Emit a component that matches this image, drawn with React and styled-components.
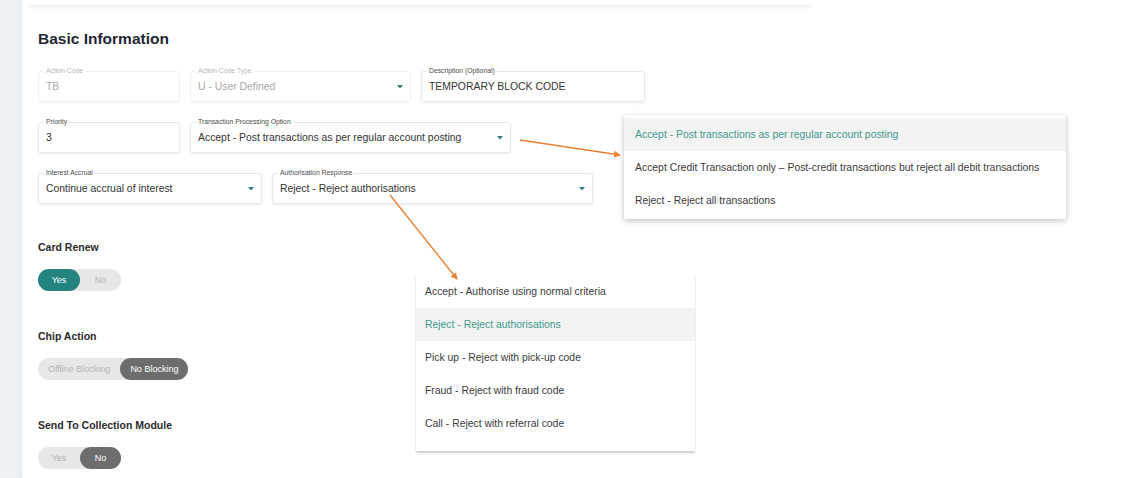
import React from "react";
import styled, { createGlobalStyle } from "styled-components";

const GlobalStyle = createGlobalStyle`
  html, body {
    margin: 0;
    padding: 0;
    background: #ffffff;
    font-family: "Liberation Sans", Arial, sans-serif;
  }
`;

const Shell = styled.div`
  position: relative;
  display: flex;
  width: 1131px;
  height: 478px;
  overflow: hidden;
  background: #ffffff;
`;

const Sidebar = styled.div`
  width: 22px;
  flex-shrink: 0;
  background: #eef1f5;
  box-shadow: inset -2px 0 3px rgba(0, 0, 0, 0.04);
`;

const Main = styled.div`
  flex: 1;
  display: flex;
  flex-direction: column;
`;

const TopCard = styled.div`
  margin-left: 6px;
  width: 784px;
  height: 5px;
  background: #ffffff;
  box-shadow: 0 2px 4px rgba(0, 0, 0, 0.08);
`;

const Content = styled.div`
  padding: 0 16px;
  display: flex;
  flex-direction: column;
`;

const Title = styled.h2`
  margin: 25px 0 0;
  font-size: 15.5px;
  line-height: 18px;
  font-weight: 700;
  color: #1f2733;
`;

const Form = styled.div`
  margin-top: 23px;
  display: flex;
  flex-direction: column;
  gap: 20px;
`;

const Row = styled.div`
  display: flex;
  gap: ${(p) => p.$gap || 10}px;
`;

const FieldBox = styled.div`
  position: relative;
  box-sizing: border-box;
  width: ${(p) => p.$width}px;
  height: 31px;
  display: flex;
  align-items: center;
  justify-content: space-between;
  padding: 0 7px;
  border: 1px solid ${(p) => (p.$disabled ? "#f1f1f1" : "#e8e8e8")};
  border-radius: 3px;
  background: #ffffff;
  box-shadow: ${(p) =>
    p.$disabled ? "0 1px 1px rgba(0,0,0,0.04)" : "0 1px 3px rgba(0,0,0,0.07)"};
`;

const FieldLabel = styled.span`
  position: absolute;
  top: -5px;
  left: 5px;
  padding: 0 2px;
  background: #ffffff;
  font-size: 6.8px;
  line-height: 8px;
  color: ${(p) => (p.$disabled ? "#b8b8b8" : "#4a4a4a")};
  white-space: nowrap;
`;

const FieldValue = styled.span`
  font-size: 10.4px;
  color: ${(p) => (p.$disabled ? "#a9a9a9" : "#333333")};
  white-space: nowrap;
`;

const Caret = styled.svg`
  width: 6px;
  height: 4px;
  flex-shrink: 0;
`;

const SectionTitle = styled.div`
  font-size: 10.5px;
  line-height: 14px;
  font-weight: 700;
  color: #2b2b2b;
`;

const Sections = styled.div`
  margin-top: 36px;
  display: flex;
  flex-direction: column;
  gap: 38px;
`;

const Section = styled.div`
  display: flex;
  flex-direction: column;
  gap: 15px;
`;

const Toggle = styled.div`
  display: flex;
  align-self: flex-start;
  height: 22px;
  border-radius: 11px;
  background: #e7e7e7;
`;

const ToggleOption = styled.div`
  min-width: ${(p) => p.$min || 41}px;
  box-sizing: border-box;
  padding: 0 10px;
  height: 22px;
  border-radius: 11px;
  display: flex;
  align-items: center;
  justify-content: center;
  font-size: 9px;
  color: ${(p) => (p.$active ? "#ffffff" : "#b3b3b3")};
  background: ${(p) =>
    p.$active ? (p.$tone === "teal" ? "#23837f" : "#6d6d6d") : "transparent"};
`;

const Menu = styled.div`
  position: absolute;
  left: ${(p) => p.$left}px;
  top: ${(p) => p.$top}px;
  width: ${(p) => p.$width}px;
  padding-top: ${(p) => p.$pt || 0}px;
  padding-bottom: ${(p) => p.$pb || 0}px;
  background: #ffffff;
  box-shadow: ${(p) => p.$shadow};
  display: flex;
  flex-direction: column;
`;

const MenuItem = styled.div`
  height: 33px;
  display: flex;
  align-items: center;
  padding-left: ${(p) => p.$pl}px;
  font-size: 10.4px;
  white-space: nowrap;
  color: ${(p) => (p.$selected ? "#3d988c" : "#3a3a3a")};
  background: ${(p) => (p.$selected ? "#f3f3f3" : "transparent")};
`;

const Arrows = styled.svg`
  position: absolute;
  left: 0;
  top: 0;
  width: 1131px;
  height: 478px;
  pointer-events: none;
`;

function Field({ label, value, width, disabled, select }) {
  return (
    <FieldBox $width={width} $disabled={disabled}>
      <FieldLabel $disabled={disabled}>{label}</FieldLabel>
      <FieldValue $disabled={disabled}>{value}</FieldValue>
      {select && (
        <Caret viewBox="0 0 6 4">
          <polygon points="0,0 6,0 3,3.5" fill="#2f7f7a" />
        </Caret>
      )}
    </FieldBox>
  );
}

const processingOptions = [
  "Accept - Post transactions as per regular account posting",
  "Accept Credit Transaction only \u2013 Post-credit transactions but reject all debit transactions",
  "Reject - Reject all transactions",
];

const authOptions = [
  "Accept - Authorise using normal criteria",
  "Reject - Reject authorisations",
  "Pick up - Reject with pick-up code",
  "Fraud - Reject with fraud code",
  "Call - Reject with referral code",
];

export default function App() {
  return (
    <>
      <GlobalStyle />
      <Shell>
        <Sidebar />
        <Main>
          <TopCard />
          <Content>
            <Title>Basic Information</Title>
            <Form>
              <Row>
                <Field label="Action Code" value="TB" width={142} disabled />
                <Field
                  label="Action Code Type"
                  value="U - User Defined"
                  width={221}
                  disabled
                  select
                />
                <Field
                  label="Description (Optional)"
                  value="TEMPORARY BLOCK CODE"
                  width={224}
                />
              </Row>
              <Row>
                <Field label="Priority" value="3" width={142} />
                <Field
                  label="Transaction Processing Option"
                  value="Accept - Post transactions as per regular account posting"
                  width={321}
                  select
                />
              </Row>
              <Row>
                <Field
                  label="Interest Accrual"
                  value="Continue accrual of interest"
                  width={224}
                  select
                />
                <Field
                  label="Authorisation Response"
                  value="Reject - Reject authorisations"
                  width={321}
                  select
                />
              </Row>
            </Form>

            <Sections>
              <Section>
                <SectionTitle>Card Renew</SectionTitle>
                <Toggle>
                  <ToggleOption $active $tone="teal" $min={42}>Yes</ToggleOption>
                  <ToggleOption>No</ToggleOption>
                </Toggle>
              </Section>
              <Section>
                <SectionTitle>Chip Action</SectionTitle>
                <Toggle>
                  <ToggleOption>Offline Blocking</ToggleOption>
                  <ToggleOption $active>No Blocking</ToggleOption>
                </Toggle>
              </Section>
              <Section>
                <SectionTitle>Send To Collection Module</SectionTitle>
                <Toggle>
                  <ToggleOption $min={42}>Yes</ToggleOption>
                  <ToggleOption $active>No</ToggleOption>
                </Toggle>
              </Section>
            </Sections>
          </Content>
        </Main>

        <Menu
          $left={624}
          $top={115}
          $width={442}
          $pt={3}
          $pb={2}
          $shadow="0 2px 6px rgba(0,0,0,0.22), 0 0 2px rgba(0,0,0,0.08)"
        >
          {processingOptions.map((o, i) => (
            <MenuItem key={o} $pl={11} $selected={i === 0}>
              {o}
            </MenuItem>
          ))}
        </Menu>

        <Menu
          $left={416}
          $top={275}
          $width={279}
          $pb={11}
          $shadow="0 2px 2px rgba(0,0,0,0.2)"
        >
          {authOptions.map((o, i) => (
            <MenuItem key={o} $pl={9} $selected={i === 1}>
              {o}
            </MenuItem>
          ))}
        </Menu>

        <Arrows viewBox="0 0 1131 478">
          <defs>
            <marker
              id="head"
              markerWidth="8"
              markerHeight="8"
              refX="6"
              refY="4"
              orient="auto"
              markerUnits="userSpaceOnUse"
            >
              <polygon points="0,0.5 7,4 0,7.5" fill="#ea8236" />
            </marker>
          </defs>
          <line
            x1="520"
            y1="140"
            x2="620"
            y2="155"
            stroke="#ea8236"
            strokeWidth="1.4"
            markerEnd="url(#head)"
          />
          <line
            x1="390"
            y1="195"
            x2="457"
            y2="279"
            stroke="#ea8236"
            strokeWidth="1.4"
            markerEnd="url(#head)"
          />
        </Arrows>
      </Shell>
    </>
  );
}
